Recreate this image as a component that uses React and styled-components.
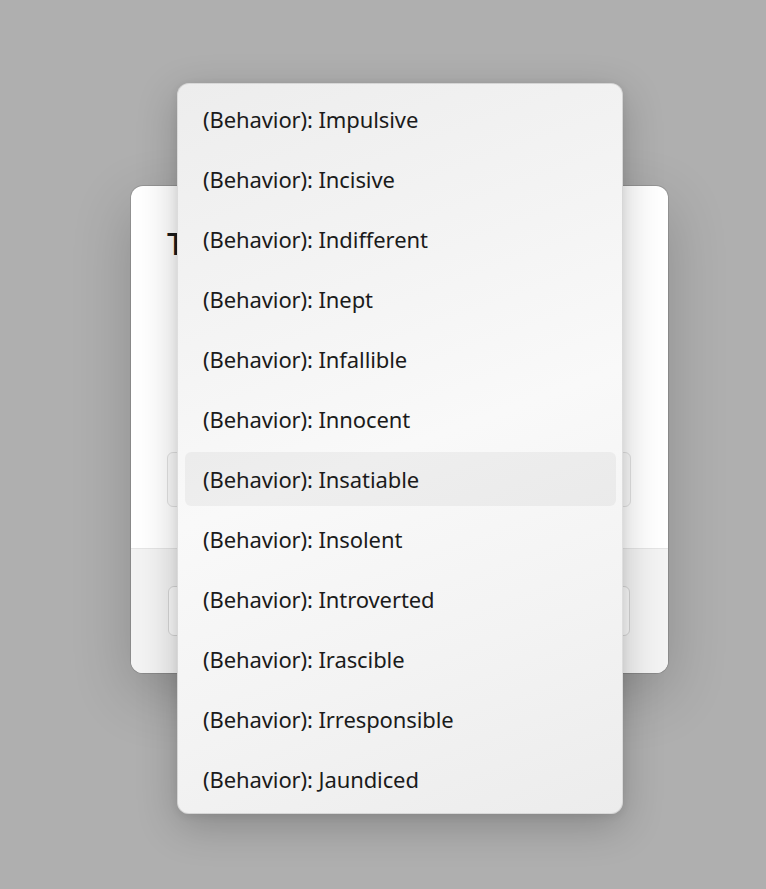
import React from 'react';
import styled, { createGlobalStyle } from 'styled-components';

const GlobalStyle = createGlobalStyle`
  html, body {
    margin: 0;
    padding: 0;
    background: #afafaf;
  }
  body {
    font-family: "Noto Sans", "Open Sans", sans-serif;
    color: #1b1b1b;
  }
`;

const Page = styled.div`
  width: 766px;
  height: 889px;
  padding: 186px 0 0 131px;
  box-sizing: border-box;
  position: relative;
  overflow: hidden;
`;

const Dialog = styled.div`
  width: 537px;
  height: 487px;
  background: #ffffff;
  border-radius: 12px;
  box-shadow: 0 0 0 1px rgba(0, 0, 0, 0.12), 0 20px 60px rgba(0, 0, 0, 0.2);
  display: flex;
  flex-direction: column;
  overflow: hidden;
  position: relative;
`;

const Body = styled.div`
  flex: 1;
  padding: 30px 37px 0 36px;
  display: flex;
  flex-direction: column;
`;

const Title = styled.h2`
  margin: 0;
  font-size: 31px;
  font-weight: 500;
  line-height: 54px;
`;

const Combo = styled.div`
  margin-top: 182px;
  height: 53px;
  border: 1px solid #e2e2e2;
  border-radius: 6px;
  background: #fbfbfb;
`;

const Footer = styled.div`
  height: 125px;
  background: #f3f3f3;
  border-top: 1px solid #e5e5e5;
  box-sizing: border-box;
  padding: 37px 38px 37px 37px;
  display: flex;
  gap: 12px;
`;

const FooterButton = styled.div`
  flex: 1;
  height: 50px;
  border: 1px solid #d6d6d6;
  border-radius: 6px;
  background: #fbfbfb;
  box-sizing: border-box;
`;

const Menu = styled.ul`
  position: absolute;
  left: 177px;
  top: 83px;
  width: 446px;
  margin: 0;
  padding: 8px 0 7px;
  list-style: none;
  box-sizing: border-box;
  display: flex;
  flex-direction: column;
  gap: 6px;
  border: 1px solid rgba(0, 0, 0, 0.1);
  border-radius: 12px;
  background: linear-gradient(160deg, #ededed 0%, #f4f4f4 30%, #f9f9f9 50%, #f3f3f3 75%, #ececec 100%);
  box-shadow: 0 12px 40px rgba(0, 0, 0, 0.22), 0 2px 8px rgba(0, 0, 0, 0.08);
`;

const Item = styled.li`
  margin: 0 6px 0 7px;
  height: 54px;
  padding-left: 18px;
  display: flex;
  align-items: center;
  border-radius: 6px;
  font-size: 22px;
  letter-spacing: -0.1px;
  background: ${(p) => (p.$active ? 'rgba(0, 0, 0, 0.045)' : 'transparent')};
`;

const items = [
  'Impulsive',
  'Incisive',
  'Indifferent',
  'Inept',
  'Infallible',
  'Innocent',
  'Insatiable',
  'Insolent',
  'Introverted',
  'Irascible',
  'Irresponsible',
  'Jaundiced',
];

export default function App() {
  return (
    <Page>
      <GlobalStyle />
      <Dialog>
        <Body>
          <Title>Trait</Title>
          <Combo />
        </Body>
        <Footer>
          <FooterButton />
          <FooterButton />
        </Footer>
      </Dialog>
      <Menu>
        {items.map((name) => (
          <Item key={name} $active={name === 'Insatiable'}>
            (Behavior): {name}
          </Item>
        ))}
      </Menu>
    </Page>
  );
}
